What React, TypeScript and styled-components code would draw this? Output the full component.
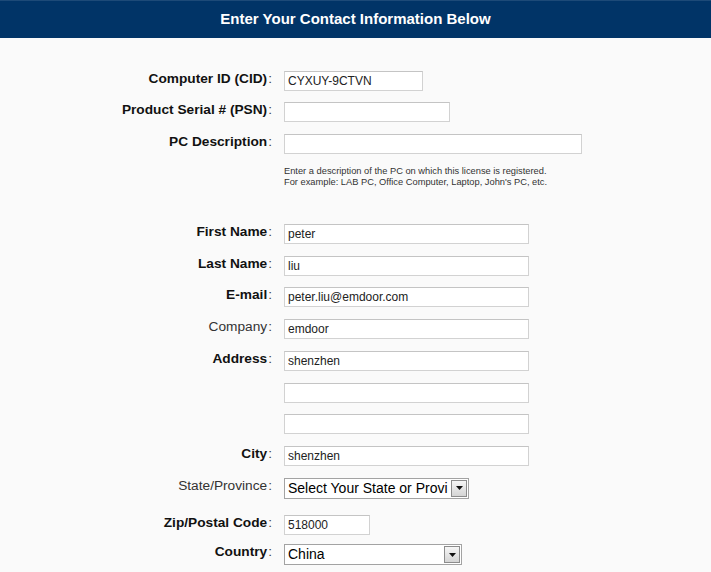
import React from "react";
import styled, { createGlobalStyle } from "styled-components";

const GlobalStyle = createGlobalStyle`
    html, body {
        margin: 0;
        padding: 0;
        background: #fafafa;
    }
    body {
        font-family: "Liberation Sans", Arial, sans-serif;
    }
`;

const Page = styled.div`
    width: 711px;
    min-height: 572px;
    background: #fafafa;
`;

const Header = styled.div`
    height: 38px;
    background: #013467;
    border-top: 1px solid #1d4a78;
    box-sizing: border-box;
    color: #ffffff;
    font-size: 15px;
    font-weight: bold;
    line-height: 36px;
    text-align: center;
`;

const Form = styled.form`
    display: flex;
    flex-direction: column;
    padding-top: 32.5px;
    margin: 0;
`;

const Row = styled.div<{ $h?: number }>`
    display: grid;
    grid-template-columns: 272px 1fr;
    column-gap: 12px;
    align-items: start;
    height: ${(p) => p.$h ?? 31.75}px;
`;

const Label = styled.label<{ $bold?: boolean }>`
    text-align: right;
    font-size: 13.7px;
    line-height: 16px;
    font-weight: ${(p) => (p.$bold ? "bold" : "normal")};
    color: ${(p) => (p.$bold ? "#111" : "#333")};
    white-space: nowrap;
`;

const Colon = styled.span`
    font-weight: normal;
    color: #444;
    margin-left: 1px;
`;

const TextInput = styled.input<{ $w: number }>`
    width: ${(p) => p.$w}px;
    height: 20px;
    box-sizing: border-box;
    margin: 0;
    border: 1px solid #d2d2d2;
    border-top-color: #c4c4c4;
    background: #ffffff;
    padding: 0 3px;
    font-family: "Liberation Sans", Arial, sans-serif;
    font-size: 12px;
    color: #222;

    &:focus {
        outline: none;
    }
`;

const Help = styled.div`
    grid-column: 2;
    font-size: 9.3px;
    line-height: 11.6px;
    color: #333;
`;

const SelectBox = styled.div<{ $w: number }>`
    width: ${(p) => p.$w}px;
    height: 21px;
    box-sizing: border-box;
    border: 1px solid #a3a3a3;
    background: #ffffff;
    display: flex;
    align-items: stretch;
`;

const SelectText = styled.span`
    flex: 1;
    overflow: hidden;
    white-space: nowrap;
    padding-left: 3px;
    font-size: 14px;
    line-height: 19px;
    color: #000;
`;

const ArrowButton = styled.span`
    width: 16px;
    margin: 1px;
    box-sizing: border-box;
    border: 1px solid #8c8c8c;
    background: linear-gradient(#f6f6f6, #d4d4d4);
    display: flex;
    align-items: center;
    justify-content: center;
`;

const Arrow = () => (
    <svg width="7" height="4" viewBox="0 0 7 4">
        <path d="M0 0h7L3.5 4z" fill="#111" />
    </svg>
);

interface FieldProps {
    label?: string;
    bold?: boolean;
    width: number;
    value?: string;
    autoFocus?: boolean;
}

const Field: React.FC<FieldProps> = ({ label, bold = true, width, value, autoFocus }) => (
    <Row>
        <Label $bold={bold}>
            {label && (
                <>
                    {label}
                    <Colon>:</Colon>
                </>
            )}
        </Label>
        <TextInput $w={width} defaultValue={value} autoFocus={autoFocus} />
    </Row>
);

interface SelectFieldProps {
    label: string;
    bold?: boolean;
    width: number;
    value: string;
    h?: number;
}

const SelectField: React.FC<SelectFieldProps> = ({ label, bold = true, width, value, h }) => (
    <Row $h={h}>
        <Label $bold={bold}>
            {label}
            <Colon>:</Colon>
        </Label>
        <SelectBox $w={width}>
            <SelectText>{value}</SelectText>
            <ArrowButton>
                <Arrow />
            </ArrowButton>
        </SelectBox>
    </Row>
);

export default function App() {
    return (
        <Page>
            <GlobalStyle />
            <Header>Enter Your Contact Information Below</Header>
            <Form onSubmit={(e) => e.preventDefault()}>
                <Field label="Computer ID (CID)" width={139} value="CYXUY-9CTVN" autoFocus />
                <Field label="Product Serial # (PSN)" width={166} />
                <Field label="PC Description" width={298} />
                <Row $h={58}>
                    <Help>
                        Enter a description of the PC on which this license is registered.
                        <br />
                        For example: LAB PC, Office Computer, Laptop, John's PC, etc.
                    </Help>
                </Row>
                <Field label="First Name" width={245} value="peter" />
                <Field label="Last Name" width={245} value="liu" />
                <Field label="E-mail" width={245} value="peter.liu@emdoor.com" />
                <Field label="Company" bold={false} width={245} value="emdoor" />
                <Field label="Address" width={245} value="shenzhen" />
                <Field width={245} />
                <Field width={245} />
                <Field label="City" width={245} value="shenzhen" />
                <SelectField
                    label="State/Province"
                    bold={false}
                    width={185}
                    value="Select Your State or Provi"
                    h={37}
                />
                <Row $h={29.5}>
                    <Label $bold>
                        Zip/Postal Code<Colon>:</Colon>
                    </Label>
                    <TextInput $w={86} defaultValue="518000" />
                </Row>
                <SelectField label="Country" width={178} value="China" />
            </Form>
        </Page>
    );
}
